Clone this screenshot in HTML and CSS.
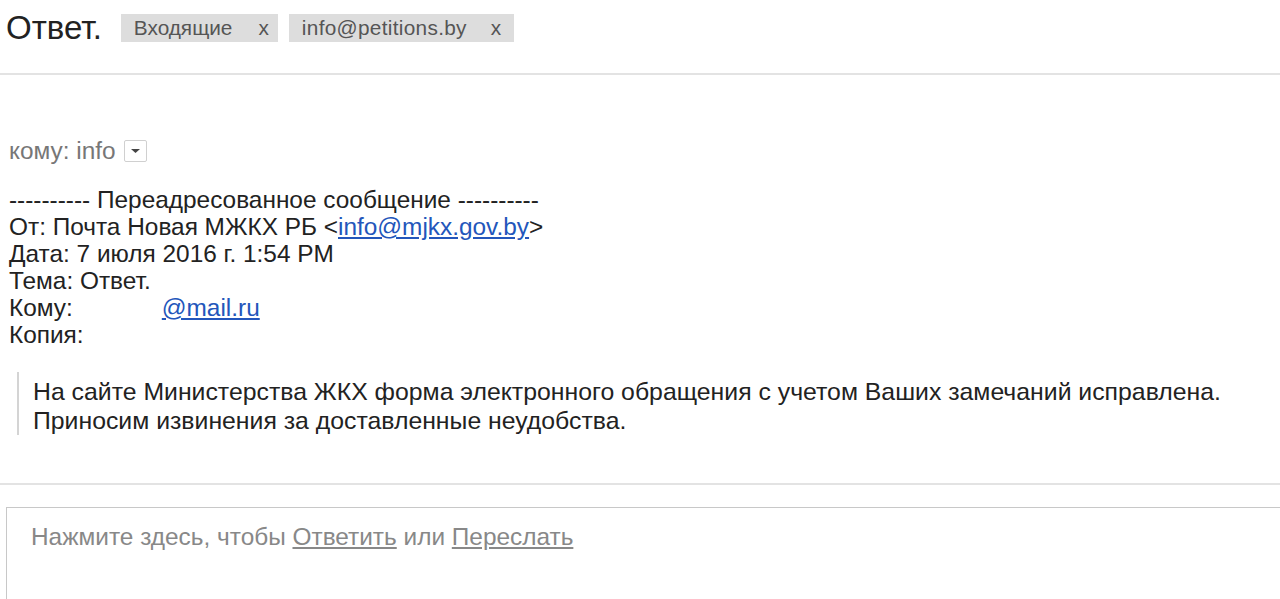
FILE: index.html
```html
<!DOCTYPE html>
<html lang="ru">
<head>
<meta charset="utf-8">
<title>Ответ.</title>
<link rel="stylesheet" href="styles.css">
</head>
<body>
<div class="header">
  <h1 class="title">Ответ.</h1>
  <span class="tag">Входящие<span class="tag-x">x</span></span>
  <span class="tag tag-wide">info@petitions.by<span class="tag-x">x</span></span>
</div>
<div class="message">
  <div class="recipient">кому: info <span class="dropdown"><svg width="11" height="6" viewBox="0 0 11 6"><path d="M1 1h9L5.5 5z" fill="#444"/></svg></span></div>
  <div class="forward">
    <div>---------- Переадресованное сообщение ----------</div>
    <div>От: Почта Новая МЖКХ РБ &lt;<a href="#">info@mjkx.gov.by</a>&gt;</div>
    <div>Дата: 7 июля 2016 г. 1:54 PM</div>
    <div>Тема: Ответ.</div>
    <div>Кому:<span class="gap"></span><a href="#">@mail.ru</a></div>
    <div>Копия:</div>
  </div>
  <blockquote class="quote">
    <div>На сайте Министерства ЖКХ форма электронного обращения с учетом Ваших замечаний исправлена.</div>
    <div>Приносим извинения за доставленные неудобства.</div>
  </blockquote>
</div>
<div class="reply">
  <div class="reply-box">Нажмите здесь, чтобы <a href="#">Ответить</a> или <a href="#">Переслать</a></div>
</div>
</body>
</html>
```
FILE: styles.css
```css
html, body {
  margin: 0;
  padding: 0;
  background: #fff;
  overflow: hidden;
}
body {
  font-family: "Liberation Sans", Arial, sans-serif;
  color: #222;
}
.header {
  height: 75px;
  border-bottom: 2px solid #e3e3e3;
  display: flex;
  align-items: flex-start;
  padding-left: 6px;
  box-sizing: border-box;
}
.title {
  margin: 9px 0 0 0;
  font-weight: normal;
  font-size: 33px;
  line-height: 38px;
  color: #222;
  white-space: nowrap;
}
.tag {
  margin-top: 14px;
  margin-left: 19px;
  height: 28px;
  line-height: 28px;
  background: #dddddd;
  color: #555;
  font-size: 20.8px;
  padding: 0 9px 0 13px;
  display: inline-flex;
  white-space: nowrap;
}
.tag + .tag { margin-left: 11px; }
.tag-x { margin-left: 26px; }
.tag-wide { padding-right: 12px; letter-spacing: 0.3px; }
.tag-wide .tag-x { margin-left: 24px; }
.message {
  padding-top: 62px;
  font-size: 24.4px;
  line-height: 27px;
}
.recipient {
  color: #777;
  padding-left: 9px;
  display: flex;
  align-items: center;
  white-space: pre;
}
.dropdown {
  width: 23px;
  height: 22px;
  border: 1px solid #d0d0d0;
  border-radius: 2px;
  margin-left: 2px;
  display: inline-flex;
  align-items: center;
  justify-content: center;
  box-sizing: border-box;
}
.forward {
  margin-top: 22px;
  padding-left: 9px;
  color: #222;
  white-space: nowrap;
}
.gap { display: inline-block; width: 89px; }
a { color: #2356bb; }
.quote {
  margin: 24px 0 0 17px;
  padding: 5px 0 0 14px;
  border-left: 2px solid #d4d4d4;
  font-size: 24.8px;
  line-height: 29px;
  height: 58px;
  color: #222;
  white-space: nowrap;
}
.reply {
  margin-top: 48px;
  border-top: 2px solid #e3e3e3;
  padding: 22px 0 0 6px;
}
.reply-box {
  border: 1px solid #c8c8c8;
  border-right: none;
  border-bottom: none;
  height: 76px;
  padding: 15px 0 0 24px;
  font-size: 24.4px;
  line-height: 28px;
  color: #888;
  white-space: nowrap;
}
.reply-box a { color: #888; }
```
